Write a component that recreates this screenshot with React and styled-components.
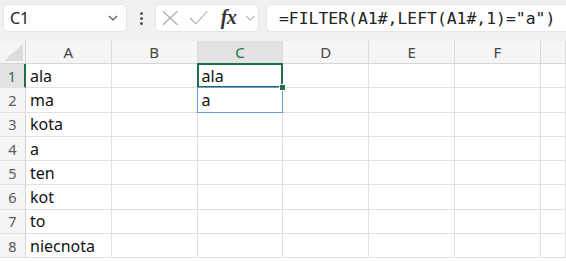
import React from "react";
import styled, { createGlobalStyle } from "styled-components";

const GlobalStyle = createGlobalStyle`
  html, body {
    margin: 0;
    padding: 0;
    background: #ffffff;
    overflow: hidden;
  }
  body {
    font-family: "Noto Sans", "Liberation Sans", sans-serif;
  }
`;

const COLS = ["A", "B", "C", "D", "E", "F", ""];
const WORDS = ["ala", "ma", "kota", "a", "ten", "kot", "to", "niecnota"];
const SPILL = ["ala", "a"];

const GREEN = "#1e7145";
const GRID = "#e1e1e1";

const App = () => {
  return (
    <>
      <GlobalStyle />
      <Page>
        <Toolbar>
          <NameBox>
            <span>C1</span>
            <svg width="10" height="6" viewBox="0 0 10 6">
              <path d="M1 1 L5 5 L9 1" fill="none" stroke="#555" strokeWidth="1.2" />
            </svg>
          </NameBox>
          <Dots>
            <i />
            <i />
            <i />
          </Dots>
          <FxBox>
            <svg width="17" height="16" viewBox="0 0 17 16">
              <path d="M1 1 L16 15 M16 1 L1 15" stroke="#a8a8a8" strokeWidth="1.1" />
            </svg>
            <svg width="20" height="16" viewBox="0 0 20 16">
              <path d="M1 8 L7 14 L19 1" fill="none" stroke="#a8a8a8" strokeWidth="1.1" />
            </svg>
            <FxLabel>fx</FxLabel>
            <svg width="11" height="6" viewBox="0 0 11 6">
              <path d="M1 1 L5.5 5 L10 1" fill="none" stroke="#999" strokeWidth="1" />
            </svg>
          </FxBox>
          <FormulaBox>=FILTER(A1#,LEFT(A1#,1)="a")</FormulaBox>
        </Toolbar>

        <Sheet>
          <Corner>
            <svg width="20" height="18" viewBox="0 0 20 18">
              <path d="M19 0 L19 17 L0 17 Z" fill="#dcdcdc" />
            </svg>
          </Corner>
          {COLS.map((c, i) => (
            <ColHead key={"h" + i} $selected={c === "C"}>
              {c}
            </ColHead>
          ))}

          {WORDS.map((w, r) => (
            <React.Fragment key={r}>
              <RowHead $selected={r === 0}>{r + 1}</RowHead>
              {COLS.map((c, i) => {
                let text = "";
                if (c === "A") text = w;
                if (c === "C" && SPILL[r]) text = SPILL[r];
                return (
                  <Cell
                    key={i}
                    $active={c === "C" && r === 0}
                    $spill={c === "C" && r === 1}
                  >
                    {text}
                    {c === "C" && r === 0 && <FillHandle />}
                  </Cell>
                );
              })}
            </React.Fragment>
          ))}
        </Sheet>
      </Page>
    </>
  );
};

export default App;

const Page = styled.div`
  width: 566px;
  height: 262px;
  overflow: hidden;
  background: #ffffff;
`;

const Toolbar = styled.div`
  display: flex;
  align-items: center;
  height: 41px;
  box-sizing: border-box;
  padding: 4px 0 9px 3px;
  background: #f0f0f0;
  overflow: hidden;
`;

const Box = styled.div`
  height: 28px;
  box-sizing: border-box;
  background: #ffffff;
  border: 1px solid #e4e4e4;
  border-radius: 5px;
  display: flex;
  align-items: center;
`;

const NameBox = styled(Box)`
  width: 124px;
  flex: none;
  padding: 0 8px 0 6px;
  justify-content: space-between;
  font-size: 16px;
  color: #222;
`;

const Dots = styled.div`
  width: 28px;
  flex: none;
  display: flex;
  flex-direction: column;
  align-items: center;
  gap: 2px;

  i {
    display: block;
    width: 3px;
    height: 3px;
    border-radius: 50%;
    background: #555;
  }
`;

const FxBox = styled(Box)`
  width: 104px;
  flex: none;
  padding: 0 2px 0 6px;
  gap: 12px;

  svg:nth-child(2) {
    margin-left: -1px;
  }
  svg:last-child {
    margin-left: -3px;
  }
`;

const FxLabel = styled.span`
  font-family: "Liberation Serif", "DejaVu Serif", serif;
  font-style: italic;
  font-weight: 600;
  font-size: 20px;
  color: #333;
  letter-spacing: -0.5px;
  margin-top: -2px;
`;

const FormulaBox = styled(Box)`
  margin-left: 7px;
  width: 340px;
  flex: none;
  padding-left: 12px;
  font-family: "DejaVu Sans Mono", "Liberation Mono", monospace;
  font-size: 16.4px;
  color: #222;
  white-space: nowrap;
  border-right: none;
  border-radius: 5px 0 0 5px;
`;

const Sheet = styled.div`
  display: grid;
  grid-template-columns: 26px repeat(6, 85.8px) 1fr;
  grid-template-rows: 23px repeat(8, 24.3px);
`;

const Corner = styled.div`
  background: #f5f5f5;
  border-right: 1px solid #d6d6d6;
  border-bottom: 1px solid #d6d6d6;
  display: flex;
  align-items: flex-end;
  justify-content: flex-end;
  padding: 0 1px 1px 0;
`;

const ColHead = styled.div`
  background: ${(p) => (p.$selected ? "#e2e2e2" : "#f5f5f5")};
  color: ${(p) => (p.$selected ? GREEN : "#444")};
  border-right: 1px solid #dcdcdc;
  border-bottom: 1px solid #d6d6d6;
  display: flex;
  align-items: center;
  justify-content: center;
  font-size: 15px;
  box-sizing: border-box;
`;

const RowHead = styled.div`
  background: ${(p) => (p.$selected ? "#e2e2e2" : "#f5f5f5")};
  color: ${(p) => (p.$selected ? GREEN : "#5a5a5a")};
  border-right: ${(p) => (p.$selected ? `2px solid ${GREEN}` : "1px solid #d6d6d6")};
  border-bottom: 1px solid ${GRID};
  display: flex;
  align-items: center;
  justify-content: center;
  font-size: 14.5px;
  box-sizing: border-box;
`;

const Cell = styled.div`
  position: relative;
  box-sizing: border-box;
  border-right: 1px solid ${GRID};
  border-bottom: 1px solid ${GRID};
  display: flex;
  align-items: center;
  padding-left: 4px;
  font-size: 16px;
  color: #111;
  white-space: nowrap;

  &::after {
    content: "";
    position: absolute;
    pointer-events: none;
    display: ${(p) => (p.$active || p.$spill ? "block" : "none")};
    left: -1px;
    right: -1px;
    top: -1px;
    bottom: -1px;
    border: ${(p) => (p.$active ? `2px solid ${GREEN}` : "1px solid #6b98e2")};
    z-index: 1;
  }
`;

const FillHandle = styled.span`
  position: absolute;
  right: -4px;
  bottom: -4px;
  width: 5px;
  height: 5px;
  background: ${GREEN};
  border: 1px solid #ffffff;
  z-index: 2;
`;
